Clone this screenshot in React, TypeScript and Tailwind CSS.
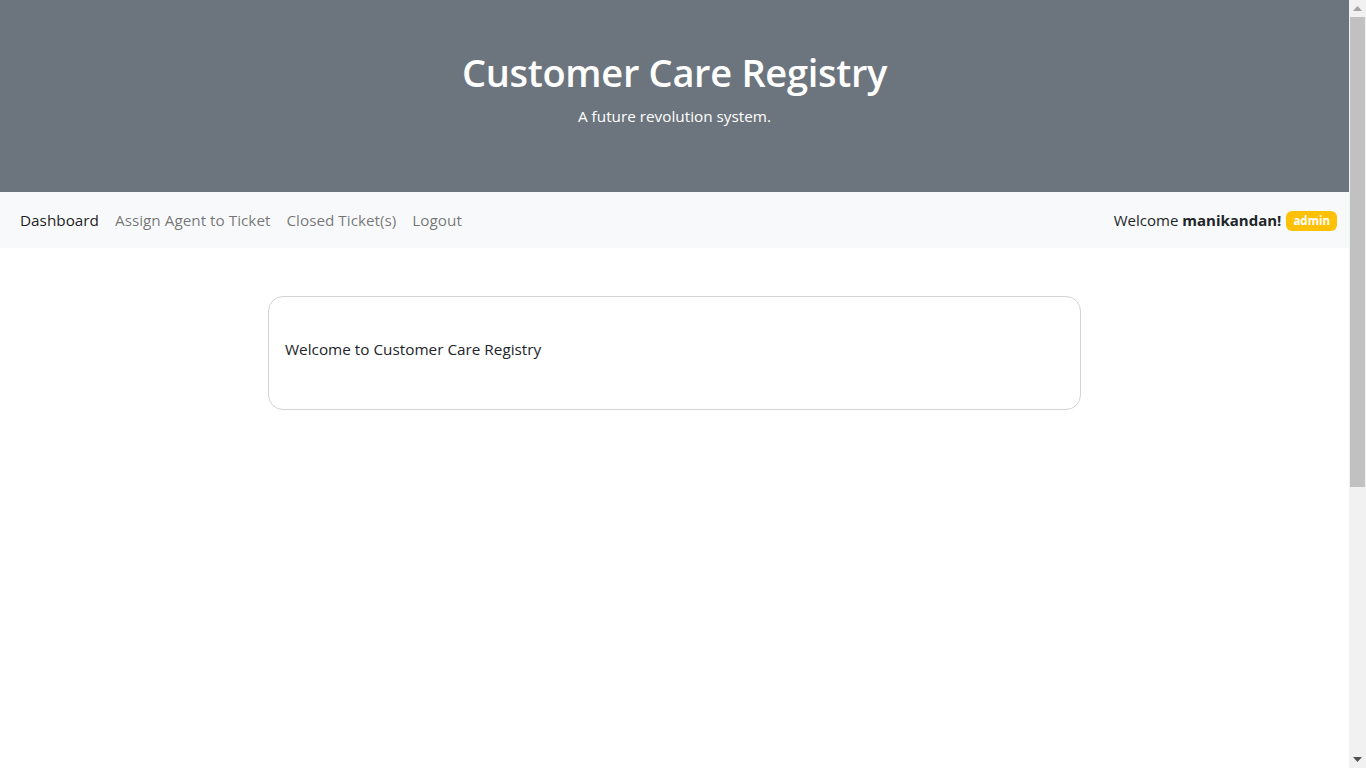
export default function App() {
  const font = { fontFamily: '"Open Sans", "Noto Sans", sans-serif' };
  return (
    <div className="h-[768px] overflow-hidden flex bg-white text-[#212529]" style={font}>
      <div className="w-[1349px] shrink-0">
        <header className="h-[192px] bg-[#6c757d] flex flex-col items-center pt-[50px] text-white">
          <h1 className="text-[38px] leading-[1.2] font-semibold tracking-[-0.3px]">Customer Care Registry</h1>
          <p className="text-[15.3px] leading-[1.5] mt-[9px]">A future revolution system.</p>
        </header>
        <nav className="h-[56px] bg-[#f8f9fa] flex items-center justify-between pl-[12px] pr-[12px]">
          <ul className="flex items-center text-[15.3px]">
            <li className="px-[8px] text-black/90">Dashboard</li>
            <li className="px-[8px] text-black/55">Assign Agent to Ticket</li>
            <li className="px-[8px] text-black/55">Closed Ticket(s)</li>
            <li className="px-[8px] text-black/55">Logout</li>
          </ul>
          <div className="flex items-center text-[15px] text-[#212529]">
            <span>Welcome <b className="font-bold">manikandan!</b></span>
            <span className="ml-[5px] mt-[2px] bg-[#ffc107] text-white text-[11.5px] font-bold rounded-[6px] px-[7px] h-[20px] flex items-center leading-none">admin</span>
          </div>
        </nav>
        <main className="flex justify-center pt-[48px]">
          <div className="w-[813px] h-[114px] border border-[#d3d3d3] rounded-[15px] flex items-center px-[16px] pb-[8px]">
            <p className="text-[15.3px] text-[#212529]">Welcome to Customer Care Registry</p>
          </div>
        </main>
      </div>
      <div className="w-[17px] shrink-0 h-full bg-[#f1f1f1] flex flex-col items-center">
        <div className="h-[17px] w-full flex items-center justify-center">
          <svg width="9" height="5" viewBox="0 0 9 5"><path d="M0 5 L4.5 0 L9 5 Z" fill="#a3a3a3" /></svg>
        </div>
        <div className="w-[15px] h-[470px] bg-[#c1c1c1]" />
        <div className="flex-1" />
        <div className="h-[17px] w-full flex items-center justify-center">
          <svg width="9" height="5" viewBox="0 0 9 5"><path d="M0 0 L9 0 L4.5 5 Z" fill="#505050" /></svg>
        </div>
      </div>
    </div>
  );
}
